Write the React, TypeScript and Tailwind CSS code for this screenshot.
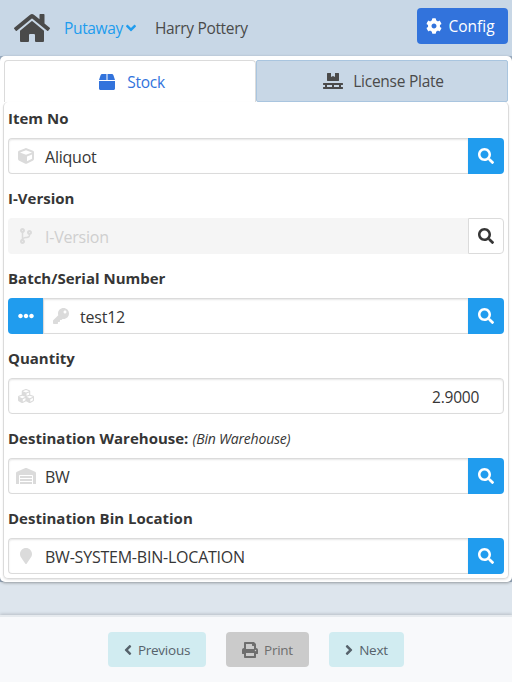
import type { ReactNode } from 'react';
import type { IconType } from 'react-icons';
import {
  FaAngleDown, FaAngleLeft, FaAngleRight, FaBox, FaCodeBranch, FaCog, FaCube, FaCubes,
  FaEllipsisH, FaHome, FaKey, FaMapMarker, FaPallet, FaPrint, FaSearch, FaWarehouse,
} from 'react-icons/fa';

type FieldProps = {
  label: string;
  note?: string;
  icon: IconType;
  iconClass?: string;
  value: ReactNode;
  disabled?: boolean;
  options?: boolean;
  numeric?: boolean;
};

function Field({ label, note, icon: Icon, iconClass = 'size-4', value, disabled, options, numeric }: FieldProps) {
  return (
    <div className="mb-3">
      <div className="mb-2 flex h-6 items-center text-[15px] font-bold whitespace-nowrap text-[#363636]">
        <span>{label}</span>
        {note && <span className="ml-1 pt-px text-[14px] font-normal tracking-[-0.2px] italic">{note}</span>}
      </div>
      <div className="flex h-9">
        {options && (
          <button className="flex w-[35px] items-center justify-center rounded-l-[4px] bg-[#209cee] text-white">
            <FaEllipsisH className="size-4" />
          </button>
        )}
        <div
          className={`flex flex-1 items-center border ${numeric ? 'rounded-[4px]' : options ? 'border-r-0' : 'rounded-l-[4px] border-r-0'} ${
            disabled ? 'border-[#f5f5f5] bg-[#f5f5f5] text-[#cfcfcf]' : 'border-[#dbdbdb] bg-white text-[#363636] shadow-[inset_0_1px_2px_rgba(10,10,10,0.1)]'
          }`}
        >
          <span className="flex w-[36px] shrink-0 justify-center pr-[2px] text-[#dbdbdb]">
            <Icon className={iconClass} />
          </span>
          <span className={`pt-px leading-6 ${numeric ? 'ml-auto pr-6 text-[15.5px] tracking-[-0.25px]' : 'text-[16px] tracking-[-0.22px]'}`}>{value}</span>
        </div>
        {!numeric && (
          <button
            className={`flex w-9 items-center justify-center rounded-r-[4px] ${
              disabled ? 'border border-[#dbdbdb] bg-white text-[#363636]' : 'bg-[#209cee] text-white'
            }`}
          >
            <FaSearch className="size-4" />
          </button>
        )}
      </div>
    </div>
  );
}

export default function App() {
  return (
    <div className="flex h-[682px] w-[512px] flex-col overflow-hidden bg-[#dde5ed] font-['Open_Sans','Noto_Sans',sans-serif] text-[#4a4a4a]">
      <header className="flex h-14 shrink-0 items-center bg-[#c8d7e6] pr-1 pl-[14px] text-[15.5px]">
        <FaHome className="h-8 w-9" />
        <span className="ml-[14px] flex items-center text-[#209cee]">
          <span className="w-[59px] pt-0.5 tracking-[-0.35px]">Putaway</span>
          <FaAngleDown className="ml-0.5 h-4 w-[12px]" />
        </span>
        <span className="ml-[18px] pt-0.5 tracking-[-0.34px]">Harry Pottery</span>
        <button className="mb-1 ml-auto flex h-9 w-[91px] items-center justify-center gap-[6px] rounded-[4px] bg-[#3273dc] pr-1 text-white">
          <FaCog className="size-4" />
          <span className="pt-0.5">Config</span>
        </button>
      </header>
      <div className="bg-[#9dafc3]">
        <main className="h-[526px] rounded-[5px] bg-white px-[3px] pt-1 shadow-[0_1px_3px_rgba(10,10,10,0.35)]">
          <nav className="flex h-[42px] pr-px pl-px text-[15.5px] tracking-[-0.25px]">
            <div className="flex w-[252px] items-center justify-center gap-3 rounded-t-[4px] border border-b-0 border-[#dbdbdb] pl-1 text-[#3273dc]">
              <FaBox className="size-4" />
              <span className="pt-0.5">Stock</span>
            </div>
            <div className="flex flex-1 items-center justify-center gap-[10px] rounded-[2px] border border-[#a9c5df] bg-[#c8d7e6] pl-[3px]">
              <FaPallet className="h-4 w-5" />
              <span className="pt-0.5">License Plate</span>
            </div>
          </nav>
          <section className="h-[477px] rounded-[5px] border border-t-0 border-[#dbdbdb] px-1 pt-1 shadow-[0_1px_2px_rgba(10,10,10,0.1)]">
            <Field label="Item No" icon={FaCube} value="Aliquot" />
            <Field label="I-Version" icon={FaCodeBranch} value="I-Version" disabled />
            <Field label="Batch/Serial Number" icon={FaKey} value="test12" options />
            <Field label="Quantity" icon={FaCubes} value="2.9000" numeric />
            <Field label="Destination Warehouse:" note="(Bin Warehouse)" icon={FaWarehouse} iconClass="h-4 w-5" value="BW" />
            <Field label="Destination Bin Location" icon={FaMapMarker} value="BW-SYSTEM-BIN-LOCATION" />
          </section>
        </main>
      </div>
      <footer className="mt-auto flex h-[67px] items-start justify-center gap-5 border-t-2 border-[#e6eaee] bg-[#f8f9fb] pt-[15px] text-[13.5px] tracking-[-0.25px] shadow-[0_-1px_3px_rgba(10,10,10,0.18)]">
        <button className="flex h-[35px] w-[98px] items-center justify-center gap-[6px] rounded-[4px] bg-[#d1ecf1] text-[#56626b]">
          <FaAngleLeft className="h-4 w-2" /><span className="pt-px">Previous</span>
        </button>
        <button className="flex h-[35px] w-[83px] items-center justify-center gap-[6px] rounded-[4px] bg-[#cbcbcb] text-[#6e6e6e]">
          <FaPrint className="size-4" /><span className="pt-px">Print</span>
        </button>
        <button className="flex h-[35px] w-[75px] items-center justify-center gap-[6px] rounded-[4px] bg-[#d1ecf1] text-[#56626b]">
          <FaAngleRight className="h-4 w-2" /><span className="pt-px">Next</span>
        </button>
      </footer>
    </div>
  );
}
